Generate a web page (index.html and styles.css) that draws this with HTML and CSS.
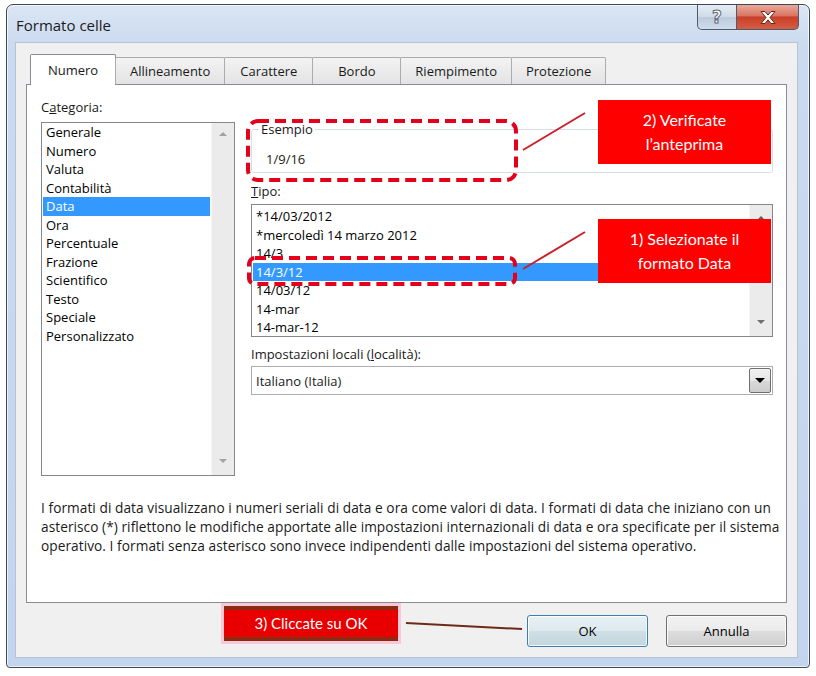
FILE: index.html
```html
<!DOCTYPE html>
<html lang="it">
<head>
    <meta charset="UTF-8">
    <title>Formato celle</title>
    <link rel="stylesheet" href="styles.css">
</head>
<body>
    <div class="window">
        <div class="titlebar">
            <span class="title">Formato celle</span>
            <div class="caption">
                <div class="cap help"><span class="q">?</span></div>
                <div class="cap close">
                    <svg width="18" height="15" viewBox="0 0 18 15">
                        <path d="M2 1.5h4l3 3.6 3-3.6h4l-5 6 5 6h-4l-3-3.6-3 3.6H2l5-6z" fill="#fff" stroke="#6b2418" stroke-width="1" stroke-linejoin="round"/>
                    </svg>
                </div>
            </div>
        </div>

        <div class="client">
            <div class="tabs">
                <div class="tab active">Numero</div>
                <div class="tab">Allineamento</div>
                <div class="tab">Carattere</div>
                <div class="tab">Bordo</div>
                <div class="tab">Riempimento</div>
                <div class="tab">Protezione</div>
            </div>

            <div class="panel">
                <div class="cols">
                    <div class="left">
                        <div class="label">C<u>a</u>tegoria:</div>
                        <div class="listbox cat-list">
                            <ul class="items">
                                <li>Generale</li>
                                <li>Numero</li>
                                <li>Valuta</li>
                                <li>Contabilità</li>
                                <li class="sel">Data</li>
                                <li>Ora</li>
                                <li>Percentuale</li>
                                <li>Frazione</li>
                                <li>Scientifico</li>
                                <li>Testo</li>
                                <li>Speciale</li>
                                <li>Personalizzato</li>
                            </ul>
                            <div class="vscroll cat-scroll">
                                <span class="arr-up"></span>
                                <span class="arr-down"></span>
                            </div>
                        </div>
                    </div>

                    <div class="right">
                        <fieldset class="sample">
                            <legend>Esempio</legend>
                            <div class="sample-val">1/9/16</div>
                        </fieldset>

                        <div class="label tipo-label"><u>T</u>ipo:</div>
                        <div class="listbox tipo-list">
                            <ul class="items">
                                <li>*14/03/2012</li>
                                <li>*mercoledì 14 marzo 2012</li>
                                <li>14/3</li>
                                <li class="sel">14/3/12</li>
                                <li>14/03/12</li>
                                <li>14-mar</li>
                                <li>14-mar-12</li>
                            </ul>
                            <div class="vscroll tipo-scroll">
                                <span class="arr-up"></span>
                                <span class="arr-down"></span>
                            </div>
                        </div>

                        <div class="label locale-label">Impostazioni locali (<u>l</u>ocalità):</div>
                        <div class="combo">
                            <span class="combo-text">Italiano (Italia)</span>
                            <span class="combo-btn"><span class="arr-down dark"></span></span>
                        </div>
                    </div>
                </div>

                <p class="desc">I formati di data visualizzano i numeri seriali di data e ora come valori di data. I formati di data che iniziano con un<br>asterisco (*) riflettono le modifiche apportate alle impostazioni internazionali di data e ora specificate per il sistema<br>operativo. I formati senza asterisco sono invece indipendenti dalle impostazioni del sistema operativo.</p>
            </div>

            <div class="buttons">
                <button class="btn default">OK</button>
                <button class="btn">Annulla</button>
            </div>
        </div>
    </div>

    <!-- annotazioni sopra il dialogo -->
    <svg class="marks" width="816" height="676" viewBox="0 0 816 676">
        <rect x="248" y="121" width="268" height="59" rx="10" fill="none" stroke="#e4001b" stroke-width="4" stroke-dasharray="11 6"/>
        <rect x="249" y="258" width="266" height="26" rx="6" fill="none" stroke="#e4001b" stroke-width="4" stroke-dasharray="11 6"/>
        <line x1="523" y1="150" x2="585" y2="113" stroke="#c9202c" stroke-width="2"/>
        <line x1="523" y1="269" x2="585" y2="232" stroke="#c9202c" stroke-width="2"/>
        <line x1="406" y1="623" x2="522" y2="629" stroke="#6e2a18" stroke-width="2"/>
    </svg>
    <div class="callout step2">2) Verificate<br>l’anteprima</div>
    <div class="callout step1">1) Selezionate il<br>formato Data</div>
    <div class="callout step3">3) Cliccate su OK</div>
</body>
</html>
```

FILE: styles.css
```css
* {
    box-sizing: border-box;
}
body {
    margin: 0;
    width: 816px;
    height: 676px;
    overflow: hidden;
    position: relative;
    background: #fff;
    font-family: "Open Sans", "Noto Sans", sans-serif;
    font-size: 13px;
    color: #1a1a1a;
}

/* finestra */
.window {
    margin: 4px 0 0 6px;
    width: 804px;
    height: 664px;
    border: 1px solid #3c4858;
    border-radius: 7px 7px 4px 4px;
    background: linear-gradient(to bottom, #dbe6f4 0, #cbdaef 40px, #c3d4ed 100%);
    box-shadow: inset 0 0 0 1px rgba(255, 255, 255, 0.7);
    display: flex;
    flex-direction: column;
}
.titlebar {
    height: 37px;
    display: flex;
    align-items: flex-start;
    padding-left: 9px;
}
.title {
    margin-top: 10px;
    line-height: 20px;
    font-size: 15px;
    color: #1b1b1b;
}
.caption {
    margin-left: auto;
    margin-right: 10px;
    display: flex;
}
.cap {
    height: 25px;
    border: 1px solid #4e5b6e;
    border-top: none;
    display: flex;
    align-items: center;
    justify-content: center;
}
.cap.help {
    width: 40px;
    border-radius: 0 0 0 5px;
    background: linear-gradient(#e6edf6, #cfdae8 50%, #bccadd 51%, #cfdcec);
}
.q {
    font-family: "DejaVu Sans", sans-serif;
    font-weight: bold;
    font-size: 17px;
    color: #fff;
    -webkit-text-stroke: 1px #5d6779;
    line-height: 20px;
}
.cap.close {
    width: 62px;
    border-left: none;
    border-radius: 0 0 5px 0;
    background: linear-gradient(#eaa99b, #da7462 45%, #c8402b 50%, #d55c40);
}

.client {
    flex: 1;
    margin: 0 11px 9px 8px;
    background: #f0f0f0;
    border: 1px solid #b4c3d8;
    padding: 11px 10px 0 10px;
    display: flex;
    flex-direction: column;
}

/* schede */
.tabs {
    display: flex;
    align-items: flex-end;
    height: 31px;
    padding-left: 4px;
    margin-bottom: -1px;
    position: relative;
    z-index: 1;
}
.tab {
    height: 27px;
    min-width: 89px;
    padding: 0 14px;
    margin-left: -1px;
    margin-bottom: 1px;
    border: 1px solid #acacac;
    border-bottom: none;
    border-radius: 2px 2px 0 0;
    background: linear-gradient(#f3f3f3, #e3e3e3);
    line-height: 26px;
    text-align: center;
}
.tab.active {
    height: 31px;
    min-width: 86px;
    margin-left: 0;
    margin-bottom: 0;
    background: #fff;
    border-color: #898c95;
    line-height: 31px;
}

.panel {
    height: 519px;
    background: #fff;
    border: 1px solid #898c95;
    padding: 13px 13px 0 14px;
}
.cols {
    display: grid;
    grid-template-columns: 194px 1fr;
    column-gap: 16px;
}
.label {
    height: 18px;
    line-height: 18px;
}

/* liste */
.listbox {
    display: flex;
    border: 1px solid #828790;
    background: #fff;
}
.cat-list {
    margin-top: 6px;
    height: 354px;
}
.items {
    flex: 1;
    list-style: none;
    margin: 0;
    padding: 0 1px;
    white-space: nowrap;
    overflow: hidden;
}
.items li {
    line-height: 18.5px;
    padding-left: 3px;
    color: #000;
}
.items li.sel {
    background: #3399ff;
    color: #fff;
}
.vscroll {
    width: 23px;
    background: #ebebeb;
    border-left: 1px solid #f5f5f5;
    display: flex;
    flex-direction: column;
    justify-content: space-between;
    align-items: center;
}
.cat-scroll {
    padding: 9px 0 12px;
}
.tipo-scroll {
    padding: 11px 0 12px;
}
.arr-up,
.arr-down {
    width: 0;
    height: 0;
    border-left: 4px solid transparent;
    border-right: 4px solid transparent;
}
.arr-up {
    border-bottom: 4px solid #a3a3a3;
}
.arr-down {
    border-top: 4px solid #a3a3a3;
}
.tipo-scroll .arr-up {
    border-bottom-color: #606060;
}
.tipo-scroll .arr-down {
    border-top-color: #707070;
}

.sample {
    margin: 22px 0 0;
    padding: 12px 7px 4px;
    border: 1px solid #d5dfe5;
    border-radius: 3px;
    min-width: 0;
}
.sample legend {
    padding: 0 2px;
    line-height: 18px;
}
.sample-val {
    padding-left: 7px;
    line-height: 18px;
}
.tipo-label {
    margin-top: 9px;
}
.tipo-list {
    margin-top: 4px;
    height: 133px;
}
.tipo-list .items {
    padding-top: 2px;
}
.locale-label {
    margin-top: 8px;
}
.combo {
    margin-top: 3px;
    height: 29px;
    border: 1px solid #abadb3;
    display: flex;
    align-items: center;
    padding: 1px 1px 1px 4px;
}
.combo-text {
    flex: 1;
}
.combo-btn {
    width: 22px;
    height: 100%;
    border: 1px solid #707070;
    border-radius: 2px;
    background: linear-gradient(#f2f2f2, #e6e6e6 50%, #d8d8d8 51%, #cdcdcd);
    display: flex;
    align-items: center;
    justify-content: center;
}
.arr-down.dark {
    border-left-width: 5px;
    border-right-width: 5px;
    border-top: 5px solid #000;
}

.desc {
    margin: 22px 0 0;
    line-height: 19px;
    font-size: 13.7px;
    letter-spacing: 0.05px;
    white-space: nowrap;
    color: #1a1a1a;
}

/* pulsanti */
.buttons {
    display: flex;
    justify-content: flex-end;
    gap: 18px;
    padding: 12px 0 0;
}
.btn {
    width: 121px;
    height: 32px;
    font-family: inherit;
    font-size: 13px;
    color: #000;
    border: 1px solid #707070;
    border-radius: 3px;
    background: linear-gradient(#f2f2f2, #ebebeb 50%, #dddddd 51%, #cfcfcf);
    box-shadow: inset 0 0 0 1px rgba(255, 255, 255, 0.8);
}
.btn.default {
    border-color: #3c7fb1;
    background: linear-gradient(#e9f1f5, #dde9ee 50%, #cfdfe6 51%, #c3d6de);
}

/* annotazioni */
.marks {
    position: absolute;
    left: 0;
    top: 0;
    pointer-events: none;
}
.callout {
    position: absolute;
    background: #ff0000;
    color: #fff;
    font-family: Lato, "Open Sans", sans-serif;
    font-size: 16px;
    text-align: center;
}
.step2 {
    left: 598px;
    top: 100px;
    width: 173px;
    height: 64px;
    line-height: 24px;
    padding-top: 8px;
}
.step1 {
    left: 598px;
    top: 219px;
    width: 173px;
    height: 64px;
    line-height: 24px;
    padding-top: 8px;
}
.step3 {
    left: 224px;
    top: 606px;
    width: 174px;
    height: 35px;
    background: #e80000;
    border-top: 4px solid #8b2c12;
    border-bottom: 4px solid #8b2c12;
    box-shadow: 0 0 0 3px #f8c8d8;
    line-height: 27px;
    font-size: 15px;
}
```
